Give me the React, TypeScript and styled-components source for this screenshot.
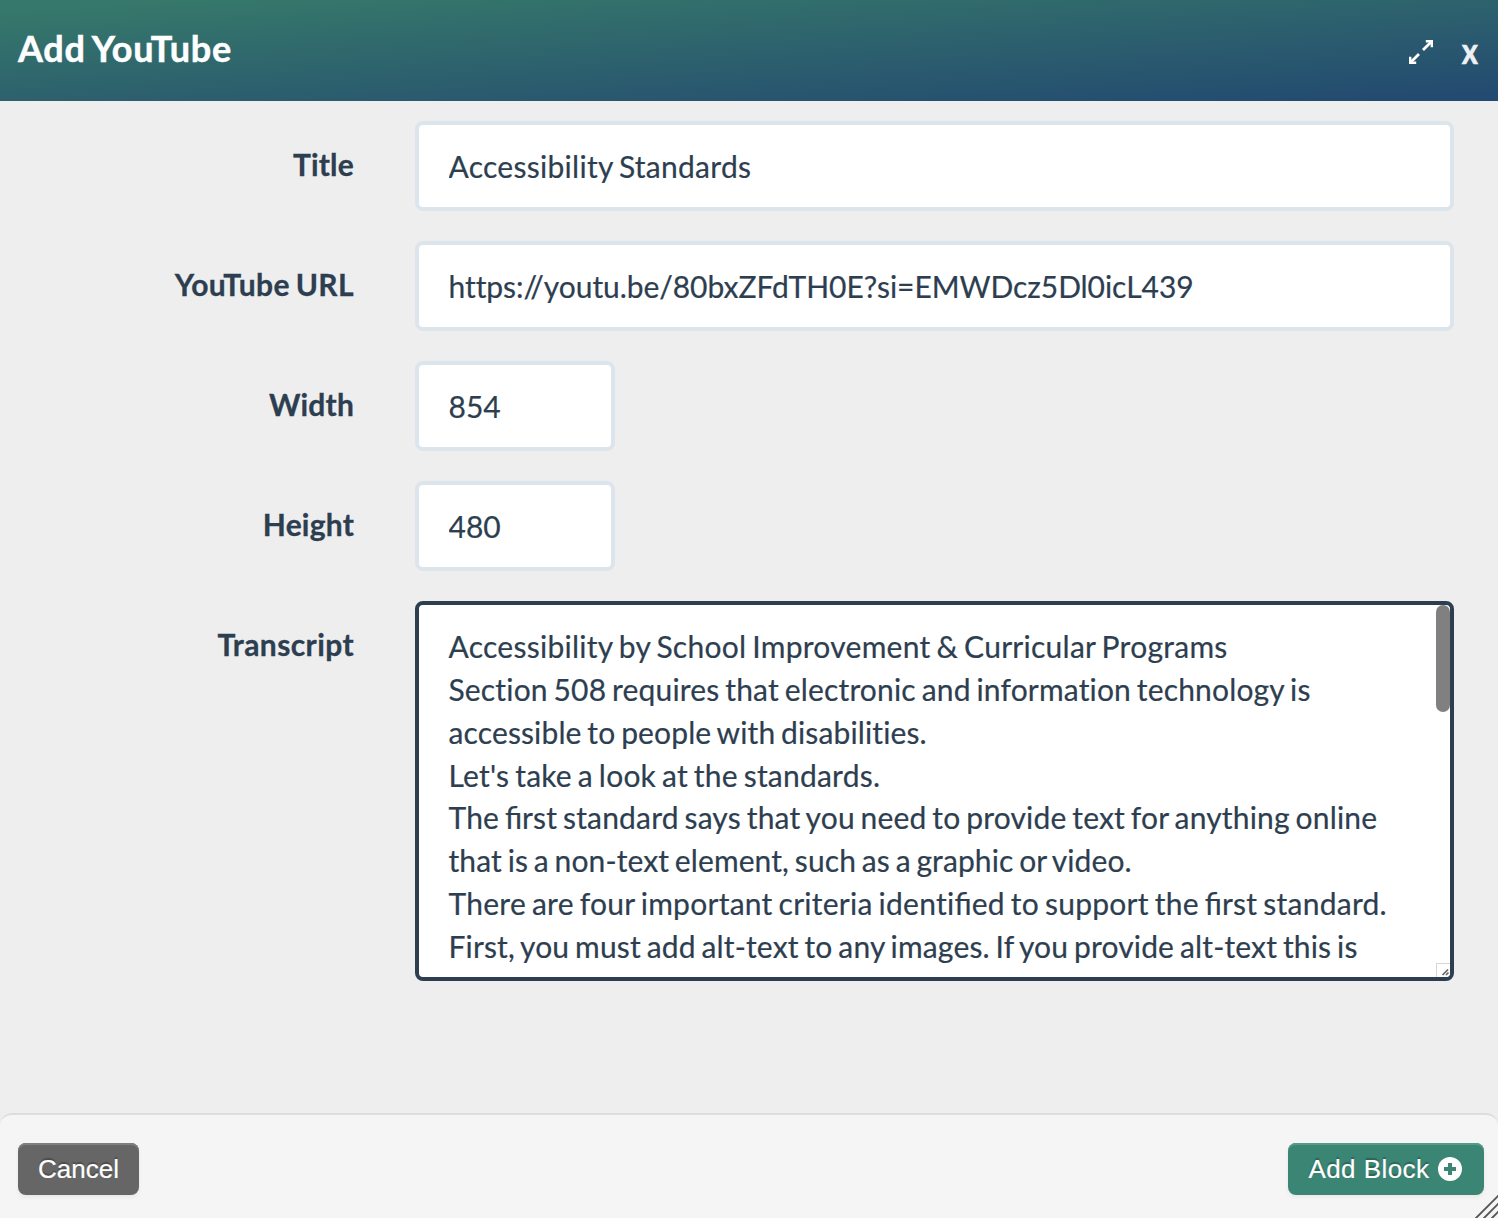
import React from 'react';
import styled, { createGlobalStyle } from 'styled-components';

const Global = createGlobalStyle`
  *{box-sizing:border-box}
  body{margin:0;background:#eee;font-family:Lato,"Liberation Sans",sans-serif;color:#2d3e50;overflow:hidden}
`;
const Dialog = styled.div`display:flex;flex-direction:column;width:1498px;height:1218px;background:#eee;position:relative;overflow:hidden;`;
const Header = styled.header`height:101px;flex:none;display:flex;justify-content:space-between;padding:0 20px 0 18px;background:linear-gradient(176.4deg,#36786b 6%,#234a70 97%);color:#fff;`;
const Heading = styled.h1`margin:0;font-size:36px;line-height:96px;font-weight:700;letter-spacing:0.75px;word-spacing:-2px;font-variant-ligatures:none;-webkit-text-stroke:0.5px #fff;`;
const Tools = styled.div`display:flex;align-items:flex-start;gap:29px;padding-top:39px;`;
const Tool = styled.button`display:flex;padding:1px 0 0;border:0;background:none;color:#fff;`;
const Close = styled(Tool)`padding:0;font:700 31px/26px Lato,sans-serif;color:#eef1f4;-webkit-text-stroke:0.5px #eef1f4;transform:scaleY(1.14);transform-origin:50% 90%;`;
const Form = styled.form`flex:1;display:flex;flex-direction:column;gap:30px;padding:20px 44px 0 0;`;
const Row = styled.div`display:grid;grid-template-columns:354px 1fr;column-gap:61px;`;
const Label = styled.label<{ $ls?: number }>`text-align:right;font-size:30px;font-weight:700;line-height:43px;padding-top:22px;font-variant-ligatures:none;letter-spacing:${p => p.$ls ?? 0.2}px;word-spacing:-2px;-webkit-text-stroke:0.3px #2d3e50;`;
const Input = styled.input<{ $w?: number; $ls?: number; $ws?: number }>`width:${p => p.$w ? p.$w + 'px' : '100%'};height:90px;border:4px solid #dce4ec;border-radius:8px;background:#fff;padding:0 29px 1px 29.5px;font:400 30px/43px Lato,sans-serif;color:#2d3e50;outline:none;font-variant-ligatures:none;letter-spacing:${p => p.$ls ?? 0}px;word-spacing:${p => p.$ws ?? 0}px;-webkit-text-stroke:0.2px #2d3e50;`;
const Area = styled.div`height:380px;border:4px solid #2d3e50;border-radius:8px;background:#fff;padding:20px 29px 0 29.5px;font-size:30px;line-height:42.86px;overflow:hidden;position:relative;-webkit-text-stroke:0.2px #2d3e50;`;
const Line = styled.div<{ $ls: number }>`white-space:pre;word-spacing:-2px;font-variant-ligatures:none;letter-spacing:${p => p.$ls}px;`;
const Ligature = styled.span`letter-spacing:0;font-variant-ligatures:common-ligatures;`;
const Thumb = styled.div`position:absolute;right:0;top:0;width:14px;height:107px;border-radius:7px;background:#808080;`;
const Grip = styled.div`position:absolute;right:0;bottom:0;width:14px;height:14px;border:1px solid #d6d6d6;border-width:1px 0 0 1px;background:#fff;svg{display:block}`;
const Footer = styled.footer`height:105px;flex:none;display:flex;justify-content:space-between;align-items:flex-start;padding:28px 14px 0 18px;background:#f5f5f5;border-top:2px solid #ddd;border-radius:12px 12px 0 0;`;
const Button = styled.button<{ $bg: string; $top: string; $ls?: number }>`height:52px;border:0;border-radius:8px;background:${p => p.$bg};color:#fff;font:400 26px/1 "Liberation Sans",Arial,sans-serif;letter-spacing:${p => p.$ls ?? 0}px;padding:0 20px;display:flex;align-items:center;gap:8.5px;text-shadow:0 -2px 1px rgba(0,0,0,.25);-webkit-text-stroke:0.2px #fff;box-shadow:inset 0 2px 0 ${p => p.$top},0 2px 4px rgba(0,0,0,.06);svg{margin-right:2px}`;
const Resize = styled.svg`position:absolute;right:0;bottom:0;`;

const lines: [string, number][] = [
  ['Accessibility by School Improvement & Curricular Programs', 0.27],
  ['Section 508 requires that electronic and information technology is', 0.165],
  ['accessible to people with disabilities.', 0.13],
  ["Let's take a look at the standards.", 0.22],
  ['The first standard says that you need to provide text for anything online', 0.17],
  ['that is a non-text element, such as a graphic or video.', 0.1],
  ['There are four important criteria identified to support the first standard.', 0.26],
  ['First, you must add alt-text to any images. If you provide alt-text this is', 0.155],
];

const withLigatures = (text: string) =>
  text.split(/(fi)/).map((part, i) => (part === 'fi' ? <Ligature key={i}>fi</Ligature> : part));

export default function App() {
  return (
    <Dialog>
      <Global />
      <Header>
        <Heading>Add YouTube</Heading>
        <Tools>
          <Tool type="button" aria-label="Expand">
            <svg width="24" height="24" viewBox="0 0 24 24" fill="none" stroke="#fff">
              <path d="M14 10L22 2M10 14L2 22" strokeWidth="2.8" />
              <path d="M16.8 1.2h6v6M1.2 16.8v6h6" strokeWidth="2.4" />
            </svg>
          </Tool>
          <Close type="button">x</Close>
        </Tools>
      </Header>
      <Form>
        <Row><Label>Title</Label><Input $ls={0.28} $ws={-2} defaultValue="Accessibility Standards" /></Row>
        <Row><Label $ls={0.4}>YouTube URL</Label><Input $ls={-0.06} defaultValue="https://youtu.be/80bxZFdTH0E?si=EMWDcz5Dl0icL439" /></Row>
        <Row><Label>Width</Label><Input $w={200} defaultValue="854" /></Row>
        <Row><Label>Height</Label><Input $w={200} defaultValue="480" /></Row>
        <Row>
          <Label $ls={0.4}>Transcript</Label>
          <Area>
            {lines.map(([t, ls]) => <Line key={t} $ls={ls}>{withLigatures(t)}</Line>)}
            <Thumb />
            <Grip>
              <svg width="13" height="13" fill="none" stroke="#666" strokeWidth="1.7"><path d="M5.5 11L11 5.5M9 11l2.5-2.5" /></svg>
            </Grip>
          </Area>
        </Row>
      </Form>
      <Footer>
        <Button type="button" $bg="#666" $top="#7f7f7f">Cancel</Button>
        <Button type="button" $bg="#3a8573" $top="#579a8a" $ls={0.45}>
          Add Block
          <svg width="24" height="24" viewBox="0 0 24 24">
            <circle cx="12" cy="12" r="12" fill="#fff" />
            <path d="M12 6v12M6 12h12" stroke="#3a8573" strokeWidth="4" />
          </svg>
        </Button>
      </Footer>
      <Resize width="24" height="24" fill="none" stroke="#555" strokeWidth="1.9"><path d="M0 26L26 0M8 26L26 8M16 26l10-10" /></Resize>
    </Dialog>
  );
}
